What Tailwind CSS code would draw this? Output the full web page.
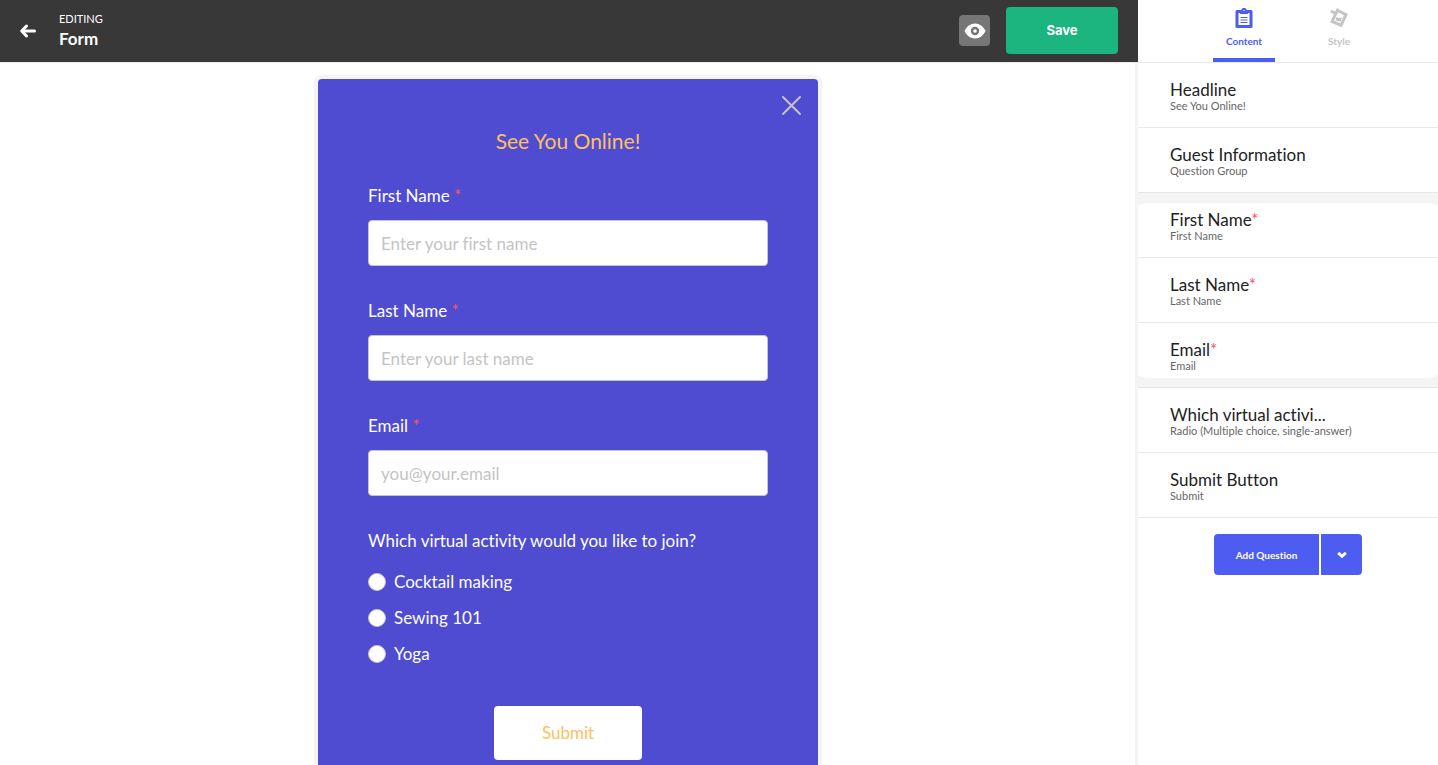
<!DOCTYPE html>
<html lang="en">
<head>
  <meta charset="UTF-8" />
  <meta name="viewport" content="width=device-width, initial-scale=1.0" />
  <title>Form - Editor</title>
  <script src="https://cdn.jsdelivr.net/npm/@tailwindcss/browser@4"></script>
</head>
<body class="flex h-screen overflow-hidden bg-white font-[Lato,sans-serif] text-[#222] [font-variant-ligatures:none]">

  <div class="flex min-w-0 flex-1 flex-col">
    <!-- Header -->
    <header class="flex h-[63px] shrink-0 items-center border-b border-[#ebebeb] bg-[#383838] px-5 pb-px text-white">
      <a href="#" aria-label="Back" class="mr-[23px]">
        <svg class="h-4 w-4" viewBox="0 0 16 16" fill="none" stroke="currentColor" stroke-width="3" stroke-linecap="round" stroke-linejoin="round">
          <path d="M6.500 3L1.800 8L6.500 13" />
          <path d="M2.500 8H14.500" />
        </svg>
      </a>
      <div>
        <p class="text-[11px] leading-4">EDITING</p>
        <h1 class="text-[17px] font-bold leading-6">Form</h1>
      </div>
      <button type="button" aria-label="Preview" class="ml-auto flex h-[31px] w-[31px] items-center justify-center rounded bg-[#767676]">
        <svg class="h-4 w-[22px]" viewBox="0 0 22 16">
          <path d="M0.500 8C2.500 3.500 6.500 0.500 11 0.500S19.500 3.500 21.500 8C19.500 12.500 15.500 15.500 11 15.500S2.500 12.500 0.500 8Z" fill="#fff" />
          <circle cx="11" cy="8" r="3" fill="#fff" stroke="#767676" stroke-width="2.400" />
        </svg>
      </button>
      <button type="button" class="ml-4 h-[47px] w-28 rounded bg-[#1cb57f] pt-px font-[Inter,sans-serif] text-[13px] font-bold">Save</button>
    </header>

    <!-- Form preview -->
    <main class="flex-1 overflow-hidden pt-4 pr-[18px] pl-4">
      <form class="relative mx-auto max-w-[500px] rounded bg-[#4f4cd1] px-[50px] pt-12 pb-20 text-[17px] leading-5 text-white shadow-[0_0_0_4px_#f4f4f4]">
        <button type="button" aria-label="Close" class="absolute top-4 right-4">
          <svg class="h-[21px] w-[21px]" viewBox="0 0 21 21" stroke="#c4c4c4" stroke-width="2" stroke-linecap="round">
            <path d="M2 2L19 19M19 2L2 19" />
          </svg>
        </button>

        <h2 class="mb-[31px] text-center text-[21px] leading-7 text-[#fdc05f]">See You Online!</h2>

        <div class="mb-[35px]">
          <label for="firstName" class="mb-[14px] block">First Name <span class="text-[#ff5454]">*</span></label>
          <input id="firstName" type="text" placeholder="Enter your first name" class="block h-[46px] w-full rounded border border-[#c4c4c4] bg-white px-3 text-[#222] placeholder:text-[#c4c4c4]" />
        </div>
        <div class="mb-[35px]">
          <label for="lastName" class="mb-[14px] block">Last Name <span class="text-[#ff5454]">*</span></label>
          <input id="lastName" type="text" placeholder="Enter your last name" class="block h-[46px] w-full rounded border border-[#c4c4c4] bg-white px-3 text-[#222] placeholder:text-[#c4c4c4]" />
        </div>
        <div class="mb-[35px]">
          <label for="email" class="mb-[14px] block">Email <span class="text-[#ff5454]">*</span></label>
          <input id="email" type="email" placeholder="you@your.email" class="block h-[46px] w-full rounded border border-[#c4c4c4] bg-white px-3 text-[#222] placeholder:text-[#c4c4c4]" />
        </div>

        <fieldset>
          <legend class="mb-[13px]">Which virtual activity would you like to join?</legend>
          <label class="flex h-9 items-center gap-2">
            <input type="radio" name="activity" class="h-[18px] w-[18px] appearance-none rounded-full border border-[#c4c4c4] bg-white checked:border-[5px] checked:border-[#fdc05f]" />
            Cocktail making
          </label>
          <label class="flex h-9 items-center gap-2">
            <input type="radio" name="activity" class="h-[18px] w-[18px] appearance-none rounded-full border border-[#c4c4c4] bg-white checked:border-[5px] checked:border-[#fdc05f]" />
            Sewing 101
          </label>
          <label class="flex h-9 items-center gap-2">
            <input type="radio" name="activity" class="h-[18px] w-[18px] appearance-none rounded-full border border-[#c4c4c4] bg-white checked:border-[5px] checked:border-[#fdc05f]" />
            Yoga
          </label>
        </fieldset>

        <button type="submit" class="mx-auto mt-[34px] block h-[54px] w-[148px] rounded bg-white text-[#fdc05f]">Submit</button>
      </form>
    </main>
  </div>

  <!-- Sidebar -->
  <aside class="flex w-[300px] shrink-0 flex-col">
    <nav class="flex h-[63px] shrink-0 justify-center gap-10 border-b border-[#ebebeb] text-[10px] font-bold leading-4">
      <a href="#" class="flex h-[62px] flex-col items-center border-b-4 border-[#4d5df2] px-[13px] pt-2 text-[#4d5df2]">
        <svg class="mb-[5px] h-5 w-[18px]" viewBox="0 0 18 20">
          <path fill="currentColor" fill-rule="evenodd" d="M2 2H6.200A2.900 2.900 0 0 1 11.800 2H16A1.500 1.500 0 0 1 17.500 3.500V18.500A1.500 1.500 0 0 1 16 20H2A1.500 1.500 0 0 1 0.500 18.500V3.500A1.500 1.500 0 0 1 2 2ZM3.500 5V17H14.500V5H13V6H5V5ZM8.400 2V3H9.600V2Z" />
          <path d="M5.500 9.500H12.500M5.500 12H12.500M5.500 14.500H12.500" stroke="currentColor" stroke-width="1" />
        </svg>
        Content
      </a>
      <a href="#" class="flex h-[62px] flex-col items-center px-[13px] pt-2 text-[#c4c4c4]">
        <svg class="mb-[5px] h-5 w-[18px]" viewBox="0 0 18 20">
          <path fill="none" stroke="currentColor" stroke-width="3" d="M0.800 3L6.500 5.800M8.800 3L16 6.700L11 17.300L2 13.500L7.500 2.200Z" />
          <path fill="currentColor" d="M5.500 12.500L6.500 9L9 10L12 9.500L10.500 13.800Z" />
        </svg>
        Style
      </a>
    </nav>

    <div class="flex-1 shadow-[-3px_0_0_#f4f4f4]">
      <ul>
        <li class="h-[65px] border-b border-[#ebebeb] px-8 pt-[17px]">
          <h3 class="text-[17px] leading-5">Headline</h3>
          <p class="text-[11px] leading-3 text-[#666]">See You Online!</p>
        </li>
        <li class="h-[65px] border-b border-[#e6e6e6] px-8 pt-[17px]">
          <h3 class="text-[17px] leading-5">Guest Information</h3>
          <p class="text-[11px] leading-3 text-[#666]">Question Group</p>
        </li>
      </ul>

      <!-- Questions inside the guest group -->
      <div class="border-b border-[#e6e6e6] bg-[#f4f4f4] pt-[10px] pb-[9px]">
        <ul class="rounded-[12px/4px] bg-white">
          <li class="h-[55px] border-b border-[#ebebeb] px-8 pt-[7px]">
            <h3 class="text-[17px] leading-5">First Name<span class="text-[#ff5454]">*</span></h3>
            <p class="text-[11px] leading-3 text-[#666]">First Name</p>
          </li>
          <li class="h-[65px] border-b border-[#ebebeb] px-8 pt-[17px]">
            <h3 class="text-[17px] leading-5">Last Name<span class="text-[#ff5454]">*</span></h3>
            <p class="text-[11px] leading-3 text-[#666]">Last Name</p>
          </li>
          <li class="h-[55px] px-8 pt-[17px]">
            <h3 class="text-[17px] leading-5">Email<span class="text-[#ff5454]">*</span></h3>
            <p class="text-[11px] leading-3 text-[#666]">Email</p>
          </li>
        </ul>
      </div>

      <ul>
        <li class="h-[65px] border-b border-[#ebebeb] px-8 pt-[17px]">
          <h3 class="text-[17px] leading-5">Which virtual activi...</h3>
          <p class="text-[11px] leading-3 text-[#666]">Radio (Multiple choice, single-answer)</p>
        </li>
        <li class="h-[65px] border-b border-[#ebebeb] px-8 pt-[17px]">
          <h3 class="text-[17px] leading-5">Submit Button</h3>
          <p class="text-[11px] leading-3 text-[#666]">Submit</p>
        </li>
      </ul>

      <div class="mt-4 flex justify-center gap-[2px] text-white">
        <button type="button" class="h-[41px] w-[105px] rounded-l bg-[#4d5df2] pt-px text-[10px] font-bold">Add Question</button>
        <button type="button" aria-label="More question types" class="flex h-[41px] w-[41px] items-center justify-center rounded-r bg-[#4d5df2]">
          <svg class="h-2 w-[10px]" viewBox="0 0 10 8" fill="none" stroke="currentColor" stroke-width="3">
            <path d="M1.200 1.800L5 5.300L8.800 1.800" />
          </svg>
        </button>
      </div>
    </div>
  </aside>

</body>
</html>
